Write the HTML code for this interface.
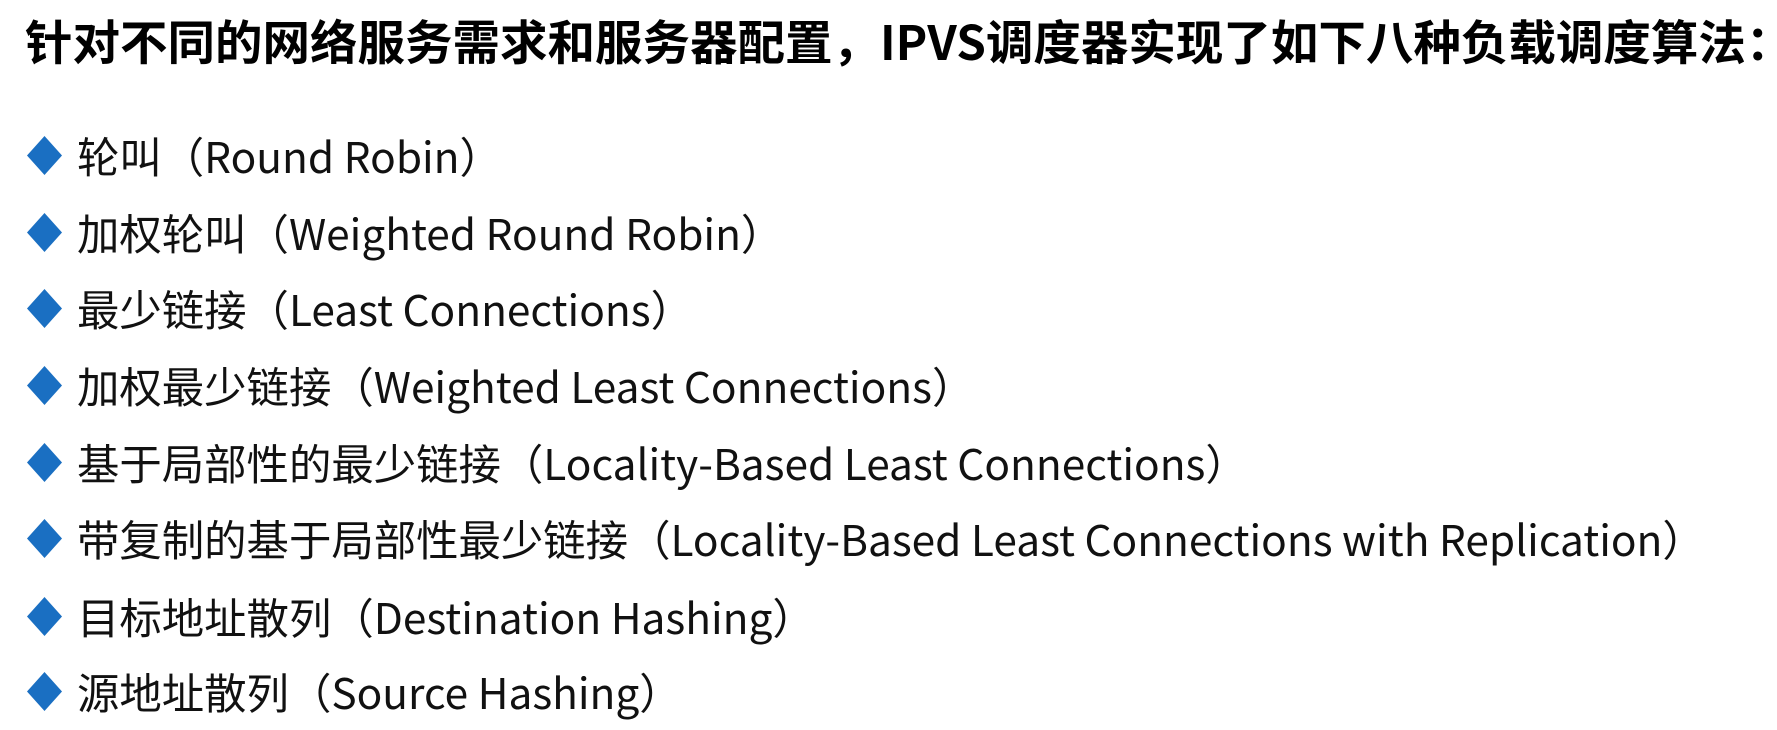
<!DOCTYPE html>
<html><head><meta charset="utf-8"><style>
html,body{margin:0;padding:0;background:#fff;width:1777px;height:729px;overflow:hidden}
body{font-family:"Noto Sans CJK SC","Liberation Sans",sans-serif;color:#111}
.t{position:absolute;left:25px;top:10px;height:60px;line-height:60px;font-size:47.5px;font-weight:bold;white-space:nowrap;color:#000}
.l{position:absolute;left:0;height:76px;line-height:76px;font-size:42.4px;white-space:nowrap;width:1777px}
.l svg{position:absolute;left:27px;top:18px}
.l span{position:absolute;left:77px;top:0}
</style></head><body>
<div class="t">针对不同的网络服务需求和服务器配置，IPVS调度器实现了如下八种负载调度算法：</div>
<div class="l" style="top:118px"><svg width="35" height="39"><polygon points="17.5,0 35,19.5 17.5,39 0,19.5" fill="#1a6fc2"/></svg><span>轮叫（Round Robin）</span></div>
<div class="l" style="top:195px"><svg width="35" height="39"><polygon points="17.5,0 35,19.5 17.5,39 0,19.5" fill="#1a6fc2"/></svg><span>加权轮叫（Weighted Round Robin）</span></div>
<div class="l" style="top:271px"><svg width="35" height="39"><polygon points="17.5,0 35,19.5 17.5,39 0,19.5" fill="#1a6fc2"/></svg><span>最少链接（Least Connections）</span></div>
<div class="l" style="top:348px"><svg width="35" height="39"><polygon points="17.5,0 35,19.5 17.5,39 0,19.5" fill="#1a6fc2"/></svg><span>加权最少链接（Weighted Least Connections）</span></div>
<div class="l" style="top:425px"><svg width="35" height="39"><polygon points="17.5,0 35,19.5 17.5,39 0,19.5" fill="#1a6fc2"/></svg><span>基于局部性的最少链接（Locality-Based Least Connections）</span></div>
<div class="l" style="top:501px"><svg width="35" height="39"><polygon points="17.5,0 35,19.5 17.5,39 0,19.5" fill="#1a6fc2"/></svg><span>带复制的基于局部性最少链接（Locality-Based Least Connections with Replication）</span></div>
<div class="l" style="top:579px"><svg width="35" height="39"><polygon points="17.5,0 35,19.5 17.5,39 0,19.5" fill="#1a6fc2"/></svg><span>目标地址散列（Destination Hashing）</span></div>
<div class="l" style="top:654px"><svg width="35" height="39"><polygon points="17.5,0 35,19.5 17.5,39 0,19.5" fill="#1a6fc2"/></svg><span>源地址散列（Source Hashing）</span></div>
</body></html>
